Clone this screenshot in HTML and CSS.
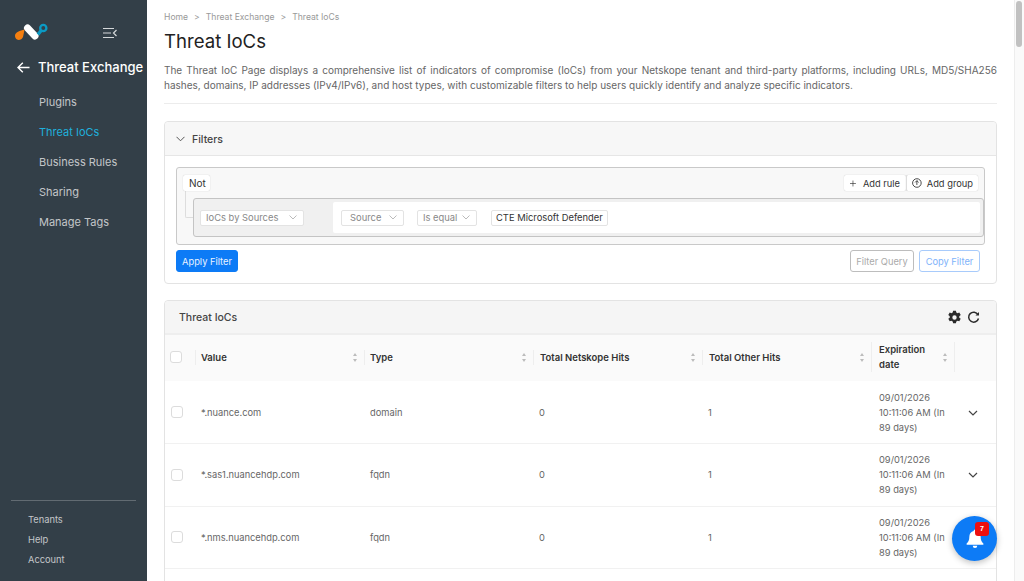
FILE: index.html
```html
<!DOCTYPE html>
<html lang="en">
<head>
  <meta charset="UTF-8" />
  <meta name="viewport" content="width=device-width, initial-scale=1.0"/>
  <title>Threat IoCs</title>
  <link rel="stylesheet" href="styles.css">
</head>
<body>
  <aside class="sidebar">
    <div class="brand">
      <svg class="logo" width="34" height="19" viewBox="0 0 34 19" fill="none">
        <path d="M13.500 5L21 13" stroke="#fff" stroke-width="7" stroke-linecap="round"/>
        <path d="M1 12.500C1 9.500 6 7.500 10.500 6.500C10 9 9.500 12 9 14C8 16.500 5 17.500 3 16.500C1.500 15.800 1 14 1 12.500z" fill="#f57f10"/>
        <path d="M24 11.500L27.500 7" stroke="#0b9ac4" stroke-width="3.400"/>
        <circle cx="29.300" cy="5" r="3.100" stroke="#0b9ac4" stroke-width="2.300"/>
      </svg>
      <svg class="collapse" width="14" height="12" viewBox="0 0 14 12" fill="none" stroke="#d5d8da" stroke-width="1.200">
        <path d="M0 1.500H11M0 6H8M0 10.500H11M13.500 3L10.500 6L13.500 9"/>
      </svg>
    </div>
    <div class="section-title">
      <svg width="13" height="11" viewBox="0 0 13 11" fill="none" stroke="#fff" stroke-width="1.400">
        <path d="M12.500 5.500H1M5.800 .7L1 5.500L5.800 10.300"/>
      </svg>
      <span>Threat Exchange</span>
    </div>
    <nav class="nav">
      <a>Plugins</a>
      <a class="active">Threat IoCs</a>
      <a>Business Rules</a>
      <a>Sharing</a>
      <a>Manage Tags</a>
    </nav>
    <div class="side-foot">
      <a>Tenants</a>
      <a>Help</a>
      <a>Account</a>
    </div>
  </aside>

  <main class="content">
    <div class="crumbs"><span>Home</span><span>&gt;</span><span>Threat Exchange</span><span>&gt;</span><span>Threat IoCs</span></div>
    <h1>Threat IoCs</h1>
    <p class="intro">The Threat IoC Page displays a comprehensive list of indicators of compromise (IoCs) from your Netskope tenant and third-party platforms, including URLs, MD5/SHA256 hashes, domains, IP addresses (IPv4/IPv6), and host types, with customizable filters to help users quickly identify and analyze specific indicators.</p>

    <section class="card filters">
      <div class="card-head">
        <svg width="9" height="6" viewBox="0 0 9 6" fill="none" stroke="#555" stroke-width="1"><path d="M.5 .8L4.500 4.800L8.500 .8"/></svg>
        <span class="filters-title">Filters</span>
      </div>
      <div class="filter-body">
        <div class="qb-group">
          <div class="qb-top">
            <span class="qb-btn qb-not">Not</span>
            <div class="qb-actions">
              <span class="qb-btn add-rule">
                <svg width="9" height="9" viewBox="0 0 9 9" stroke="#333" stroke-width="1"><path d="M4.500 0V9M0 4.500H9"/></svg>
                Add rule
              </span>
              <span class="qb-btn add-group">
                <svg width="10" height="10" viewBox="0 0 10 10" fill="none" stroke="#333" stroke-width=".9"><circle cx="5" cy="5" r="4.400"/><path d="M5 2.600V7M3.200 4.400L5 2.600L6.800 4.400"/></svg>
                Add group
              </span>
            </div>
          </div>
          <div class="qb-rule">
            <span class="select sel-field">IoCs by Sources<svg width="8" height="5" viewBox="0 0 8 5" fill="none" stroke="#bbb"><path d="M.5 .5L4 4L7.500 .5"/></svg></span>
            <div class="rule-values">
              <span class="select sel-source">Source<svg width="8" height="5" viewBox="0 0 8 5" fill="none" stroke="#bbb"><path d="M.5 .5L4 4L7.500 .5"/></svg></span>
              <span class="select sel-op">Is equal<svg width="8" height="5" viewBox="0 0 8 5" fill="none" stroke="#bbb"><path d="M.5 .5L4 4L7.500 .5"/></svg></span>
              <span class="select sel-value">CTE Microsoft Defender</span>
            </div>
          </div>
        </div>
        <div class="filter-actions">
          <button class="btn-apply">Apply Filter</button>
          <div class="filter-right">
            <button class="btn-query">Filter Query</button>
            <button class="btn-copy">Copy Filter</button>
          </div>
        </div>
      </div>
    </section>

    <section class="card iocs">
      <div class="card-head table-head">
        <span>Threat IoCs</span>
        <div class="head-icons">
          <svg width="15" height="15" viewBox="0 0 24 24" fill="#2b2b2b"><path fill-rule="evenodd" d="M14.300 1l.5 3a8.500 8.500 0 0 1 2 1.150l2.850-1.100 2.300 4-2.350 1.900a8.500 8.500 0 0 1 0 2.300l2.350 1.900-2.300 4-2.850-1.100a8.500 8.500 0 0 1-2 1.150l-.5 3H9.700l-.5-3a8.500 8.500 0 0 1-2-1.150l-2.850 1.100-2.300-4 2.350-1.900a8.500 8.500 0 0 1 0-2.300L2.050 8.050l2.300-4 2.850 1.100a8.500 8.500 0 0 1 2-1.150l.5-3zM12 8.500a3.500 3.500 0 1 0 0 7 3.500 3.500 0 0 0 0-7z"/></svg>
          <svg width="13" height="13" viewBox="0 0 13 13" fill="none" stroke="#2b2b2b" stroke-width="1.500"><path d="M11 3.600A5 5 0 1 0 11.500 7.500"/><path d="M12 1V4.500H8.500z" fill="#2b2b2b" stroke="none"/></svg>
        </div>
      </div>
      <table class="grid">
        <thead>
          <tr>
            <th class="col-check"><span class="check"></span></th>
            <th class="col-value"><div class="th-in">Value<i class="sort"></i></div></th>
            <th class="col-type"><div class="th-in">Type<i class="sort"></i></div></th>
            <th class="col-hits"><div class="th-in">Total Netskope Hits<i class="sort"></i></div></th>
            <th class="col-other"><div class="th-in">Total Other Hits<i class="sort"></i></div></th>
            <th class="col-exp"><div class="th-in">Expiration date<i class="sort"></i></div></th>
            <th class="col-more"></th>
          </tr>
        </thead>
        <tbody>
          <tr>
            <td><span class="check"></span></td>
            <td>*.nuance.com</td><td>domain</td><td>0</td><td>1</td>
            <td>09/01/2026 10:11:06 AM (In 89 days)</td>
            <td class="more"><svg width="10" height="6" viewBox="0 0 10 6" fill="none" stroke="#444" stroke-width="1.200"><path d="M1 1L5 5L9 1"/></svg></td>
          </tr>
          <tr>
            <td><span class="check"></span></td>
            <td>*.sas1.nuancehdp.com</td><td>fqdn</td><td>0</td><td>1</td>
            <td>09/01/2026 10:11:06 AM (In 89 days)</td>
            <td class="more"><svg width="10" height="6" viewBox="0 0 10 6" fill="none" stroke="#444" stroke-width="1.200"><path d="M1 1L5 5L9 1"/></svg></td>
          </tr>
          <tr>
            <td><span class="check"></span></td>
            <td>*.nms.nuancehdp.com</td><td>fqdn</td><td>0</td><td>1</td>
            <td>09/01/2026 10:11:06 AM (In 89 days)</td>
            <td class="more"><svg width="10" height="6" viewBox="0 0 10 6" fill="none" stroke="#444" stroke-width="1.200"><path d="M1 1L5 5L9 1"/></svg></td>
          </tr>
          <tr>
            <td></td><td></td><td></td><td></td><td></td>
            <td>09/01/2026 10:11:06 AM (In 89 days)</td>
            <td class="more"></td>
          </tr>
        </tbody>
      </table>
    </section>
  </main>

  <div class="scrollbar"><div class="thumb"></div></div>

  <button class="bell">
    <svg width="18" height="20" viewBox="0 0 20 21" fill="#fff"><path d="M10 0a1.600 1.600 0 0 0-1.500 1.700C5.500 2.400 3.700 5 3.700 8c0 4-1 5.500-3 7.500v1.300h18.600v-1.300c-2-2-3-3.500-3-7.500 0-3-1.800-5.600-4.800-6.300A1.600 1.600 0 0 0 10 0zM7.500 18a2.500 2.500 0 0 0 5 0z"/></svg>
    <span class="badge">7</span>
  </button>
</body>
</html>
```

FILE: styles.css
```css
* {
  box-sizing: border-box;
}
html, body {
  height: 100%;
}
body {
  margin: 0;
  font-family: Inter, "Liberation Sans", sans-serif;
  display: flex;
  height: 100vh;
  overflow: hidden;
  background: #fff;
  color: #333;
  position: relative;
}
.sidebar {
  width: 147px;
  flex: none;
  background: #333f48;
  display: flex;
  flex-direction: column;
  color: #c3c6c8;
}
.brand {
  display: flex;
  align-items: center;
  height: 20px;
  margin-top: 22px;
  padding-left: 14px;
}
.collapse {
  margin-left: 55px;
  margin-top: 1px;
}
.section-title {
  display: flex;
  align-items: center;
  gap: 8px;
  margin-top: 15px;
  padding-left: 17px;
  height: 20px;
  color: #fff;
  font-size: 13px;
  font-weight: 500;
  white-space: nowrap;
}
.nav {
  display: flex;
  flex-direction: column;
  margin-top: 10px;
  padding-left: 39px;
  font-size: 11px;
}
.nav a {
  height: 30px;
  line-height: 30px;
}
.nav .active {
  color: #1fb0dc;
}
.side-foot {
  margin: auto 11px 0;
  border-top: 1px solid #626b72;
  padding: 9px 0 11px 17px;
  font-size: 9.3px;
  display: flex;
  flex-direction: column;
}
.side-foot a {
  height: 20px;
  line-height: 20px;
}
.content {
  width: 867px;
  flex: none;
  padding: 0 17px;
  overflow: hidden;
}
.crumbs {
  display: flex;
  gap: 6px;
  margin-top: 11px;
  height: 12px;
  line-height: 12px;
  font-size: 8.6px;
  color: #999;
}
h1 {
  margin: 5px 0 0;
  font-size: 18.6px;
  line-height: 26px;
  font-weight: 400;
  color: #222;
}
.intro {
  margin: 9px 0 0;
  padding-bottom: 10px;
  border-bottom: 1px solid #ececec;
  font-size: 10px;
  line-height: 15px;
  color: #666;
  text-align: justify;
}
.card {
  border: 1px solid #e3e3e3;
  border-radius: 4px;
}
.filters {
  margin-top: 17px;
  height: 163px;
}
.card-head {
  height: 34px;
  background: #f7f7f7;
  border-bottom: 1px solid #e6e6e6;
  border-radius: 4px 4px 0 0;
  display: flex;
  align-items: center;
  gap: 7px;
  padding-left: 11px;
  font-size: 10.5px;
  font-weight: 500;
  color: #444;
}
.filters-title {
  padding-top: 1px;
}
.filter-body {
  padding: 11px 11px 0;
}
.qb-group {
  height: 78px;
  border: 1px solid #c9c9c9;
  border-radius: 3px;
  background: #f8f8f8;
  padding: 7px 6px 0;
  position: relative;
}
.qb-group::before {
  content: "";
  position: absolute;
  left: 8px;
  top: 22px;
  width: 10px;
  height: 27px;
  border-left: 1px solid #ddd;
  border-bottom: 1px solid #ddd;
  border-radius: 0 0 0 2px;
}
.qb-top {
  display: flex;
  justify-content: space-between;
  height: 16px;
}
.qb-btn {
  display: inline-flex;
  align-items: center;
  gap: 7px;
  height: 16px;
  padding: 0 6px;
  background: #fff;
  border-radius: 2px;
  box-shadow: 0 0 1px #bbb;
  font-size: 9.3px;
  color: #333;
  white-space: nowrap;
}
.qb-not {
  width: 27px;
  font-size: 10px;
  position: relative;
}
.qb-actions {
  display: flex;
}
.add-rule {
  width: 62px;
}
.add-group {
  width: 72px;
  border-left: 1px solid #ddd;
  gap: 5px;
  padding: 0 5px;
}
.qb-rule {
  position: absolute;
  left: 16px;
  right: 0;
  top: 30px;
  height: 39px;
  border: 1px solid #c4c4c4;
  border-radius: 3px;
  background: #f0f0f0;
  display: flex;
  align-items: center;
  padding-left: 6px;
}
.rule-values {
  margin-left: 29px;
  flex: 1;
  height: 31px;
  background: #fff;
  border-radius: 2px;
  margin-right: 3px;
  display: flex;
  align-items: center;
  padding-left: 8px;
}
.select {
  display: inline-flex;
  align-items: center;
  justify-content: space-between;
  height: 16px;
  padding: 0 6px 0 5px;
  background: #fff;
  border: 1px solid #e3e3e3;
  border-radius: 2px;
  font-size: 9.4px;
  color: #888;
  white-space: nowrap;
}
.sel-field {
  width: 104px;
}
.sel-source {
  width: 63px;
  padding-left: 8px;
}
.sel-op {
  width: 60px;
  margin-left: 13px;
}
.sel-value {
  margin-left: 14px;
  color: #333;
  padding: 0 4px;
}
.filter-actions {
  display: flex;
  justify-content: space-between;
  align-items: flex-start;
  margin-top: 5px;
}
.filter-actions button {
  height: 22px;
  border-radius: 3px;
  font-family: inherit;
  font-size: 9.3px;
  padding: 0;
  background: #fff;
}
.filter-actions .btn-apply {
  width: 62px;
  background: #0d7bf6;
  border: 1px solid #0d7bf6;
  color: #eaf3ff;
}
.filter-right {
  display: flex;
  gap: 5px;
  margin-right: 5px;
}
.filter-actions .btn-query {
  width: 64px;
  border: 1px solid #bdbdbd;
  color: #aaa;
}
.filter-actions .btn-copy {
  width: 61px;
  border: 1px solid #a8cbfb;
  color: #80b3fa;
}
.iocs {
  margin-top: 16px;
}
.table-head {
  justify-content: space-between;
  padding: 0 16px 0 14px;
  background: #f5f5f5;
  border-bottom: 2px solid #eeeeee;
  font-size: 10.5px;
}
.head-icons {
  display: flex;
  align-items: center;
  gap: 5px;
}
.grid {
  width: 100%;
  border-collapse: collapse;
  table-layout: fixed;
  font-size: 9.3px;
  color: #666;
}
.grid th {
  height: 46px;
  background: #fafafa;
  padding: 0 0 2px;
  font-size: 9.5px;
  font-weight: 600;
  color: #333;
  text-align: left;
  line-height: 15px;
}
.col-check { width: 30px; }
.col-value { width: 169px; }
.col-type { width: 169px; }
.col-hits { width: 169px; }
.col-other { width: 169px; }
.col-exp { width: 84px; }
.col-check .check {
  margin-left: 5px;
}
.th-in {
  display: flex;
  align-items: center;
  justify-content: space-between;
  padding-left: 6px;
  min-height: 14px;
  border-left: 1px solid #eeeeee;
}
.col-value .th-in,
.col-type .th-in {
  padding-left: 5px;
}
.col-exp .th-in {
  padding-left: 7px;
  border-right: 1px solid #eeeeee;
}
.sort {
  flex: none;
  width: 5px;
  height: 9px;
  margin: 0 6px 0 4px;
  position: relative;
}
.sort::before,
.sort::after {
  content: "";
  position: absolute;
  left: 0;
  border-left: 2.5px solid transparent;
  border-right: 2.5px solid transparent;
}
.sort::before {
  top: 0;
  border-bottom: 3.500px solid #bcbcbc;
}
.sort::after {
  bottom: 0;
  border-top: 3.500px solid #bcbcbc;
}
.grid td {
  height: 62.500px;
  padding: 0 0 0 6px;
  border-bottom: 1px solid #f1f1f1;
  line-height: 15px;
}
.grid td:nth-child(6) {
  padding-left: 8px;
}
.grid td.more {
  padding: 0 6px 0 0;
  text-align: center;
}
.check {
  display: block;
  width: 12px;
  height: 12px;
  border: 1px solid #dcdcdc;
  border-radius: 3px;
  background: #fff;
}
.scrollbar {
  flex: 1;
  background: #fafafa;
  border-left: 1px solid #ededed;
  display: flex;
  justify-content: flex-end;
}
.thumb {
  width: 6px;
  height: 46px;
  margin: 1px 2px 0 0;
  background: #c1c1c1;
  border-radius: 3px;
}
.bell {
  position: absolute;
  left: 952px;
  top: 516px;
  width: 45px;
  height: 45px;
  border: none;
  border-radius: 50%;
  background: #0d7bf6;
  box-shadow: 0 2px 6px rgba(0, 0, 0, 0.25);
  padding: 0;
  display: flex;
  align-items: center;
  justify-content: center;
}
.badge {
  position: absolute;
  left: 23px;
  top: 6px;
  width: 14px;
  height: 14px;
  border-radius: 3px;
  background: #ee0f0f;
  color: #fff;
  font-size: 7px;
  font-weight: 700;
  line-height: 14px;
  text-align: center;
}
```
